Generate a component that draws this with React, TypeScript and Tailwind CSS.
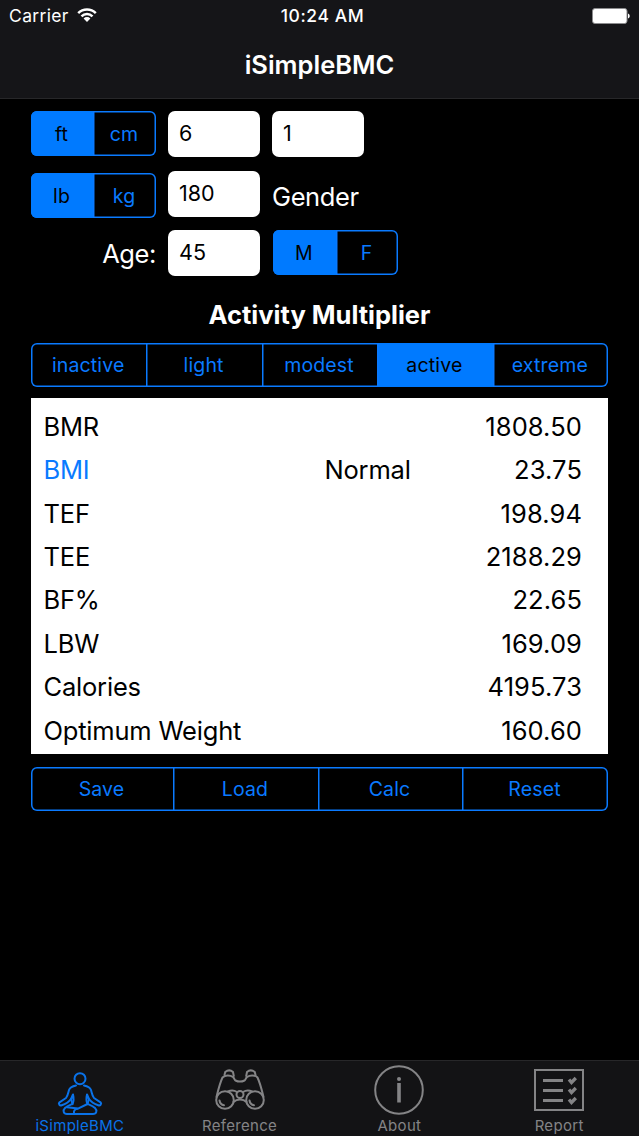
import React from 'react'
import clsx from 'clsx'

type SegmentsProps = {
  items: string[]
  active?: string
  columns: string
  className?: string
}

const Segments = ({ items, active, columns, className }: SegmentsProps) => (
  <div
    className={clsx(
      'grid overflow-hidden rounded-[6px] text-[19.5px] tracking-[0.15px] text-[#0a7aff] shadow-[inset_0_0_0_1.5px_#0a7aff]',
      columns,
      className
    )}
  >
    {items.map((item, i) => (
      <button
        key={item}
        className={clsx(
          'flex items-center justify-center pt-[1.5px] pr-[1px]',
          i > 0 && 'shadow-[inset_1.5px_0_0_0_#0a7aff]',
          item === active && 'bg-[#007aff] text-black'
        )}
      >
        {item}
      </button>
    ))}
  </div>
)

const Field = ({ value }: { value: string }) => (
  <div className="flex h-[46px] w-[92px] items-center rounded-[7px] bg-white pb-[2px] pl-[11px] text-[21.5px] text-black">
    {value}
  </div>
)

const RESULTS = [
  { label: 'BMR', value: '1808.50' },
  { label: 'BMI', value: '23.75', note: 'Normal' },
  { label: 'TEF', value: '198.94' },
  { label: 'TEE', value: '2188.29' },
  { label: 'BF%', value: '22.65' },
  { label: 'LBW', value: '169.09' },
  { label: 'Calories', value: '4195.73' },
  { label: 'Optimum Weight', value: '160.60' },
]

const StatusBar = () => (
  <div className="grid h-8 grid-cols-[1fr_auto_1fr] items-center pr-[9px] pl-[9px] text-[17.5px]">
    <div className="flex items-center gap-[8px]">
      <span className="tracking-[0.35px]">Carrier</span>
      <svg className="-mt-[2px]" width="20" height="16" viewBox="0 0 20 16" fill="none" stroke="white" strokeWidth="2.5">
        <path d="M1.2 6.1a12.5 12.5 0 0 1 17.6 0" />
        <path d="M4.5 9.3a7.8 7.8 0 0 1 11 0" />
        <path d="M10 15l-3.4-3.5a4.8 4.8 0 0 1 6.8 0z" fill="white" stroke="none" />
      </svg>
    </div>
    <span className="pl-[6px] font-medium tracking-[0.6px]">10:24 AM</span>
    <svg className="justify-self-end" width="38" height="16" viewBox="0 0 38 16">
      <rect x="0.5" y="0.5" width="34.5" height="15" rx="2.5" fill="white" stroke="#8b8b8d" />
      <path d="M36 5.5c2.3.8 2.3 4.2 0 5z" fill="white" />
    </svg>
  </div>
)

const YogaIcon = () => (
  <svg
    className="mt-[7px]"
    width="46"
    height="45"
    viewBox="0 0 46 45"
    fill="none"
    stroke="#0a72e8"
    strokeWidth="2"
    strokeLinejoin="round"
    strokeLinecap="round"
  >
    <circle cx="23" cy="7.7" r="5.5" />
    <path d="M19 14.5c-4 .8-6 1.500-7 4.500-.9 3-1 5.500-3 8L2.500 31.300c-1.500 1.500.2 3.700 2.200 3 3.800-1.300 7-3.200 9.300-6.300l2-4.500c.8 3.500.8 7-.5 9.500-3 1.200-5.500 2-7.500 4-2.500 2.500-1.500 6 2 6h26c3.500 0 4.500-3.500 2-6-2-2-4.500-2.800-7.500-4-1.300-2.500-1.300-6-.5-9.500l2 4.500c2.300 3.100 5.500 5 9.300 6.300 2 .7 3.700-1.500 2.200-3L37 27c-2-2.500-2.100-5-3-8-1-3-3-3.700-7-4.500" />
    <path d="M17 42.500c-.5-3 .8-4.500 4-4.800L30.500 33M14 28l1.500 5M32 28l-1.500 5M10 36.300l11 1.200" />
  </svg>
)

const BinocularsIcon = () => (
  <svg width="50" height="43" viewBox="0 0 50 43" fill="none" stroke="#848486" strokeWidth="2" strokeLinecap="round">
    <circle cx="10" cy="31" r="8.8" />
    <circle cx="40" cy="31" r="8.8" />
    <circle cx="25" cy="25.5" r="3.5" />
    <path d="M1.5 28C3 22 4.5 15 7.500 8.500c2.500-2.700 7.500-2.700 10.500-.5 1.500 1.500 1.500 3 2.500 3.500 2.500 1.200 6.500 1.200 9 0 1-.5 1-2 2.500-3.500 3-2.200 8-2.200 10.500.5C45.500 15 47 22 48.500 28" />
    <path d="M9.5 6l.7-3c2.500-2 5.500-2 7.800 0l.8 4M40.500 6l-.7-3c-2.500-2-5.500-2-7.800 0l-.8 4" />
    <path d="M13 22.500c3-1.500 6-1.500 9 .5M37 22.500c-3-1.500-6-1.500-9 .5M18.500 33c3.500-3.300 9.500-3.300 13 0" />
    <path d="M4.500 31.500c.4 2.600 2 4.300 4.500 4.800M34.500 31.500c.4 2.600 2 4.300 4.500 4.800" />
  </svg>
)

const InfoIcon = () => (
  <svg width="50" height="50" viewBox="0 0 50 50" fill="none" stroke="#848486">
    <circle cx="25" cy="25" r="23.8" strokeWidth="2" />
    <path d="M25 18v19.5" strokeWidth="3.6" />
    <circle cx="25" cy="14" r="2" fill="#848486" stroke="none" />
  </svg>
)

const ReportIcon = () => (
  <svg width="50" height="43" viewBox="0 0 50 43" fill="none" stroke="#848486">
    <rect x="1" y="1" width="48" height="40" strokeWidth="2" />
    <path d="M9 11.5h20M9 21.5h20M9 31.5h20" strokeWidth="2.8" />
    <path d="M35 10.5l2.500 3 4.300-4.500M35 20.500l2.500 3 4.300-4.500M35 30.500l2.500 3 4.300-4.500" strokeWidth="3.3" />
  </svg>
)

const TABS = [
  { label: 'iSimpleBMC', icon: <YogaIcon />, active: true },
  { label: 'Reference', icon: <BinocularsIcon /> },
  { label: 'About', icon: <InfoIcon /> },
  { label: 'Report', icon: <ReportIcon /> },
]

export default function App() {
  return (
    <div className="flex h-[1136px] w-[639px] flex-col bg-black font-['Inter',sans-serif] text-white">
      <header className="h-[99px] border-b border-[#272729] bg-[#151518]">
        <StatusBar />
        <h1 className="mt-[14px] text-center text-[25.5px] leading-[38px] font-semibold">iSimpleBMC</h1>
      </header>

      <main className="flex flex-1 flex-col px-[31px] pt-[12px]">
        <div className="flex">
          <Segments
            items={['ft', 'cm']}
            active="ft"
            columns="grid-cols-[62px_63px]"
            className="h-[45px] w-[125px]"
          />
          <div className="ml-[12px] flex gap-[12px]">
            <Field value="6" />
            <Field value="1" />
          </div>
        </div>
        <div className="mt-[14px] flex items-start">
          <Segments
            items={['lb', 'kg']}
            active="lb"
            columns="grid-cols-[62px_63px]"
            className="mt-[2px] h-[45px] w-[125px]"
          />
          <div className="ml-[12px]">
            <Field value="180" />
          </div>
          <span className="mt-[7px] ml-[12px] text-[25.5px] leading-[38px] tracking-[-0.4px]">Gender</span>
        </div>
        <div className="mt-[12px] flex items-start">
          <span className="mt-[5px] w-[125px] text-right text-[25.5px] leading-[38px] tracking-[-0.4px]">Age:</span>
          <div className="ml-[12px]">
            <Field value="45" />
          </div>
          <Segments
            items={['M', 'F']}
            active="M"
            columns="grid-cols-[63px_62px]"
            className="ml-[13px] h-[45px] w-[125px]"
          />
        </div>

        <h2 className="mt-[20px] text-center text-[25.5px] leading-[38px] font-bold">Activity Multiplier</h2>
        <Segments
          items={['inactive', 'light', 'modest', 'active', 'extreme']}
          active="active"
          columns="grid-cols-5"
          className="mt-[9px] h-[44px]"
        />

        <div className="mt-[11px] h-[356px] bg-white pt-[7.3px] pr-[26px] pl-[12.5px] text-[25.5px] text-black">
          {RESULTS.map(({ label, value, note }) => (
            <div key={label} className="grid h-[43.4px] grid-cols-[281px_1fr_auto] items-center tracking-[-0.2px]">
              <span className={label === 'BMI' ? 'text-[#0a7aff]' : ''}>{label}</span>
              <span>{note}</span>
              <span className="tracking-[0.1px]">{value}</span>
            </div>
          ))}
        </div>

        <Segments
          items={['Save', 'Load', 'Calc', 'Reset']}
          columns="grid-cols-[142px_145px_144px_146px]"
          className="mt-[13px] h-[44px]"
        />
      </main>

      <nav className="grid h-[76px] grid-cols-4 border-t border-[#272729] bg-[#131315] text-[#848486]">
        {TABS.map(({ label, icon, active }) => (
          <div key={label} className={clsx('flex flex-col items-center', active && 'text-[#0a72e8]')}>
            <div className="flex h-[56px] items-center justify-center pt-[2px]">{icon}</div>
            <span className="text-[15px] leading-[18px] tracking-[0.3px]">{label}</span>
          </div>
        ))}
      </nav>
    </div>
  )
}
